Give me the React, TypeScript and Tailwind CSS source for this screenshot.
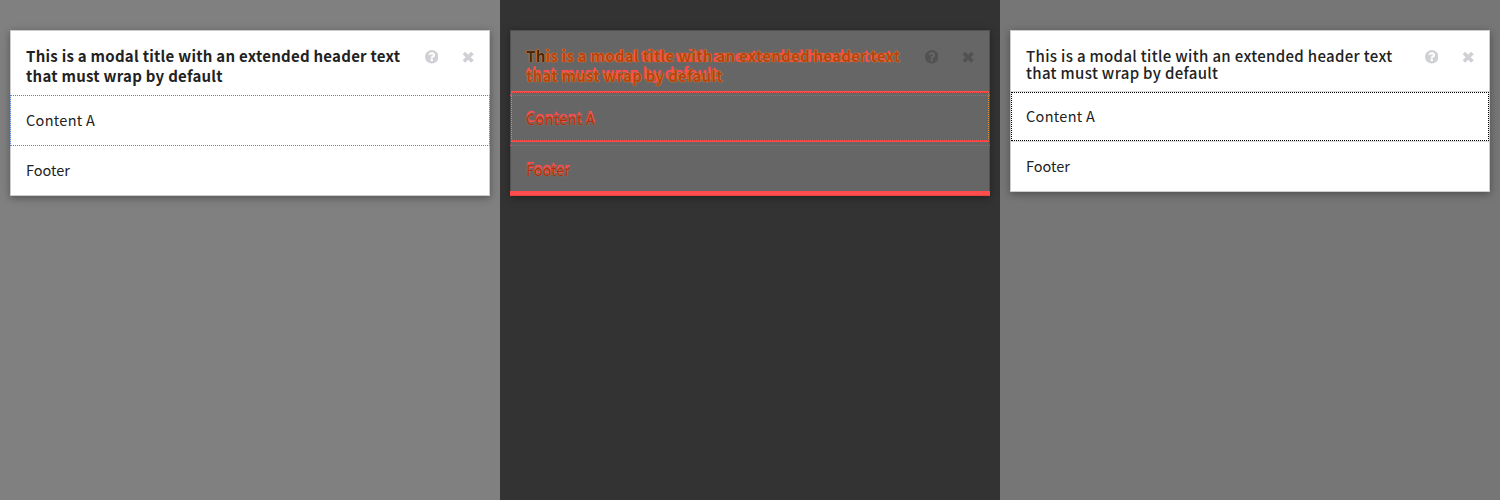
import type { ReactNode } from "react";

function HeaderIcons({ className }: { className: string }) {
  return (
    <div className={`flex items-start ${className}`}>
      <svg width="13.5" height="13.5" viewBox="0 0 1536 1536" fill="currentColor" className="mt-[19px] mr-[24px]">
        <path d="M896 1248v-192q0-14-9-23t-23-9H672q-14 0-23 9t-9 23v192q0 14 9 23t23 9h192q14 0 23-9t9-23zm256-672q0-88-55.500-163T958 297t-170-41q-243 0-371 213-15 24 8 42l132 100q7 6 19 6 16 0 25-12 53-68 86-92 34-24 86-24 48 0 85.500 26t37.500 59q0 38-20 61t-68 45q-63 28-115.500 86.500T640 892v36q0 14 9 23t23 9h192q14 0 23-9t9-23q0-19 21.500-49.500T972 829q32-18 49-28.500t46-35 44.500-48 28-60.500 12.500-81zm384 192q0 209-103 385.500T1153.500 1433 768 1536t-385.500-103T103 1153.500 0 768t103-385.500T382.500 103 768 0t385.500 103T1433 382.500 1536 768z" />
      </svg>
      <svg width="12" height="12" viewBox="0 0 12 12" stroke="currentColor" strokeWidth="3.6" className="mt-[20px] mr-[15px]">
        <path d="M1.900 1.900 L10.500 10.500 M10.500 1.900 L1.900 10.500" />
      </svg>
    </div>
  );
}

function Title({ className, accent = "" }: { className: string; accent?: string }) {
  return (
    <h2 className={`whitespace-nowrap ${className}`}>
      <span className={accent}>Th</span>is is a modal title with an extended header text
      <br />
      that must wrap by default
    </h2>
  );
}

function Modal({ className, children }: { className: string; children: ReactNode }) {
  return (
    <section className={`mx-[10px] mt-[30px] flex w-[480px] flex-col border shadow-[0_2px_8px_rgba(0,0,0,0.35)] ${className}`}>
      {children}
    </section>
  );
}

function Baseline() {
  return (
    <div className="flex h-full w-[500px] items-start bg-[#808080]">
      <Modal className="h-[166px] border-[#cccccc] bg-white text-[#222]">
        <header className="flex h-[64px] justify-between pl-[15px]">
          <Title className="pt-[15px] text-[15px] leading-[20px] font-bold tracking-[0.255px]" />
          <HeaderIcons className="text-[#cfd1d4]" />
        </header>
        <div className="-mx-px h-[51px] border border-dotted border-[#4f80e8] pl-[15px] text-[14.5px] leading-[48px] tracking-[0.3px]">
          Content A
        </div>
        <footer className="pl-[15px] text-[14.5px] leading-[48px]">Footer</footer>
      </Modal>
    </div>
  );
}

function Candidate() {
  return (
    <div className="flex h-full w-[500px] items-start bg-[#767676]">
      <Modal className="h-[162px] border-[#cccccc] bg-white text-[#222]">
        <header className="flex h-[61px] justify-between border-b border-[#dddddd] pl-[15px]">
          <Title className="pt-[16px] text-[15px] leading-[17px] font-medium tracking-[0.33px]" />
          <HeaderIcons className="text-[#cfd1d4]" />
        </header>
        <div className="h-[49px] border border-dotted border-black pl-[14px] text-[14.5px] leading-[46px] tracking-[0.3px]">
          Content A
        </div>
        <footer className="border-t border-[#dddddd] pl-[15px] text-[14.5px] leading-[48px]">Footer</footer>
      </Modal>
    </div>
  );
}

function Overlap({ text, className }: { text: string; className: string }) {
  return (
    <div className={`grid text-[14.5px] leading-[20px] ${className}`}>
      <span className="col-start-1 row-start-1 text-[#ff4c4c] [text-shadow:0_0_1px_#ff4c4c]">{text}</span>
      <span className="col-start-1 row-start-1 mt-[3px] text-[#b02c10] [text-shadow:0_0_1px_#d08a3c]">{text}</span>
    </div>
  );
}

function Difference() {
  return (
    <div className="flex h-full w-[500px] items-start bg-[#333333]">
      <Modal className="relative h-[166px] border-[#525252] bg-[#666666]">
        <header className="flex h-[60px] shrink-0 justify-between pl-[15px]">
          <div className="grid">
            <Title className="col-start-1 row-start-1 pt-[16px] text-[15px] leading-[17px] font-medium tracking-[0.33px] text-[#ff4c4c] [text-shadow:0_0_1px_#ff4c4c]" />
            <Title
              accent="text-[#4a2808]"
              className="col-start-1 row-start-1 pt-[15px] text-[15px] leading-[20px] font-bold tracking-[0.255px] text-[#b8420c] [text-shadow:0_0_1px_#e09a44,0_0_1px_#d08a3c]"
            />
          </div>
          <HeaderIcons className="text-[#525252]" />
        </header>
        <div className="h-[51px] shrink-0 border-y border-[#ff4c4c]">
          <div className="h-[49px] border border-dotted border-x-[#e0902c] border-y-[#ff4c4c]">
            <Overlap text="Content A" className="pt-[13px] pl-[14px] tracking-[0.3px]" />
          </div>
        </div>
        <div className="h-[49px] shrink-0 pl-[15px]">
          <Overlap text="Footer" className="pt-[15px]" />
        </div>
        <div className="-mx-px -mb-px h-[5px] shrink-0 border-b border-[#e84444] bg-[#ff4c4c]" />
        <div className="absolute top-[64px] -right-px -left-px h-[51px] border-y border-dotted border-[#f04458]" />
      </Modal>
    </div>
  );
}

export default function App() {
  return (
    <main className="flex h-[500px] w-[1500px] overflow-hidden font-['Noto_Sans_CJK_SC','Noto_Sans',sans-serif]">
      <Baseline />
      <Difference />
      <Candidate />
    </main>
  );
}
